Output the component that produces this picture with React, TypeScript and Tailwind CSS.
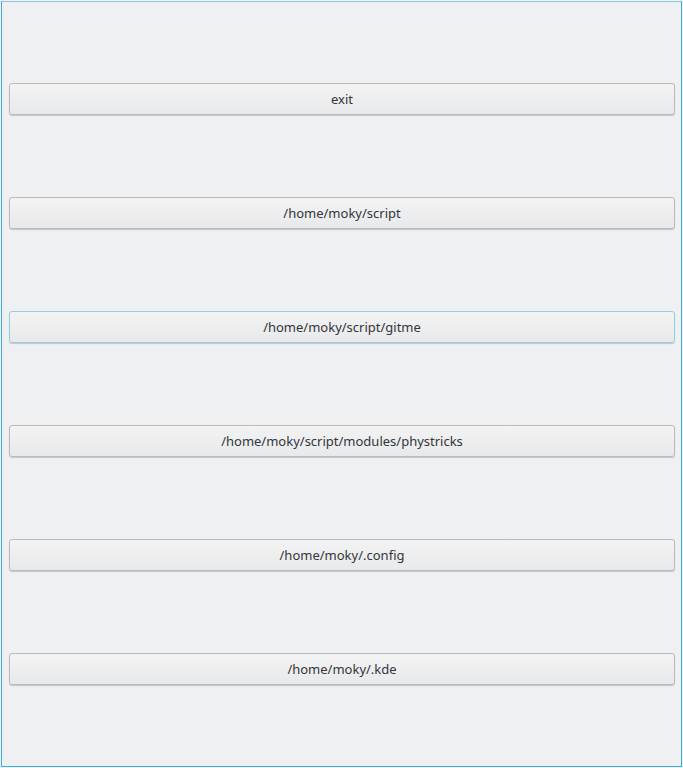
const paths = [
  'exit',
  '/home/moky/script',
  '/home/moky/script/gitme',
  '/home/moky/script/modules/phystricks',
  '/home/moky/.config',
  '/home/moky/.kde',
];

export default function App() {
  return (
    <div className="w-[683px] h-[768px] bg-[#eff0f1] p-px">
      <div className="h-full w-full border border-[#3daee9] border-t-[#8fc4e0] flex flex-col gap-[82px] pt-[81px] pl-[7px] pr-[6px]">
        {paths.map((p, i) => (
          <button
            key={p}
            className={
              'h-[32px] w-full shrink-0 pt-[2px] rounded-[3px] border bg-gradient-to-b from-[#f3f3f4] to-[#e8e9ea] shadow-[0_1px_1px_rgba(0,0,0,0.18)] text-[13px] text-[#31363b] ' +
              (i === 2 ? 'border-[#93cee9]' : 'border-[#b9babb]')
            }
            style={{ fontFamily: '"Noto Sans", sans-serif' }}
          >
            {p}
          </button>
        ))}
      </div>
    </div>
  );
}
